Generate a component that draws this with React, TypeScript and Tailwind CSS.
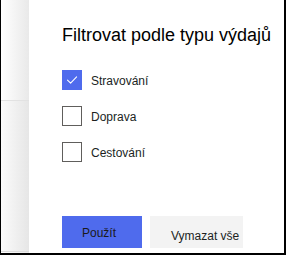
import React from "react";

function Check({ checked, label }: { checked: boolean; label: string }) {
  return (
    <div className="flex items-center h-[20px]">
      {checked ? (
        <div className="w-[20px] h-[20px] bg-[#4f6bed] flex items-center justify-center">
          <svg width="14" height="14" viewBox="0 0 14 14" fill="none">
            <path d="M2.5 7.2 L5.6 10.2 L11.6 3.8" stroke="white" strokeWidth="1.1" strokeLinecap="round" strokeLinejoin="round" />
          </svg>
        </div>
      ) : (
        <div className="w-[20px] h-[20px] border border-[#605e5c] box-border" />
      )}
      <span className="ml-[9px] text-[12px] leading-[14px] text-[#201f1e] pt-[2px]">{label}</span>
    </div>
  );
}

export default function App() {
  return (
    <div
      className="w-[286px] h-[255px] flex border-l border-r-2 border-b-2 border-black bg-white overflow-hidden"
      style={{ fontFamily: '"Liberation Sans", Arial, sans-serif' }}
    >
      <div className="w-[28px] flex flex-col bg-gradient-to-r from-white to-[#e9e9e9]">
        <div className="h-[100px]" />
        <div className="flex-1 border-t border-[#e2e2e2] bg-gradient-to-r from-[#fbfbfb] to-[#e6e6e6]" />
        <div className="h-[2px] border-t border-[#dcdcdc]" />
      </div>
      <div className="flex-1 flex flex-col pl-[33px] bg-white">
        <div className="pt-[25px] text-[18px] leading-[21px] text-black whitespace-nowrap">
          Filtrovat podle typu výdajů
        </div>
        <div className="mt-[24px] flex flex-col gap-[16px]">
          <Check checked label="Stravování" />
          <Check checked={false} label="Doprava" />
          <Check checked={false} label="Cestování" />
        </div>
        <div className="mt-[54px] flex gap-[8px]">
          <div className="w-[80px] h-[32px] bg-[#4f6bed] flex items-center justify-center text-[12px] text-[#1b1a19] pr-[6px] pt-[2px]">
            Použít
          </div>
          <div className="w-[93px] h-[32px] bg-[#f3f3f3] flex items-center pl-[21px] text-[12px] text-[#201f1e] pt-[7px] whitespace-nowrap">
            Vymazat vše
          </div>
        </div>
      </div>
    </div>
  );
}
